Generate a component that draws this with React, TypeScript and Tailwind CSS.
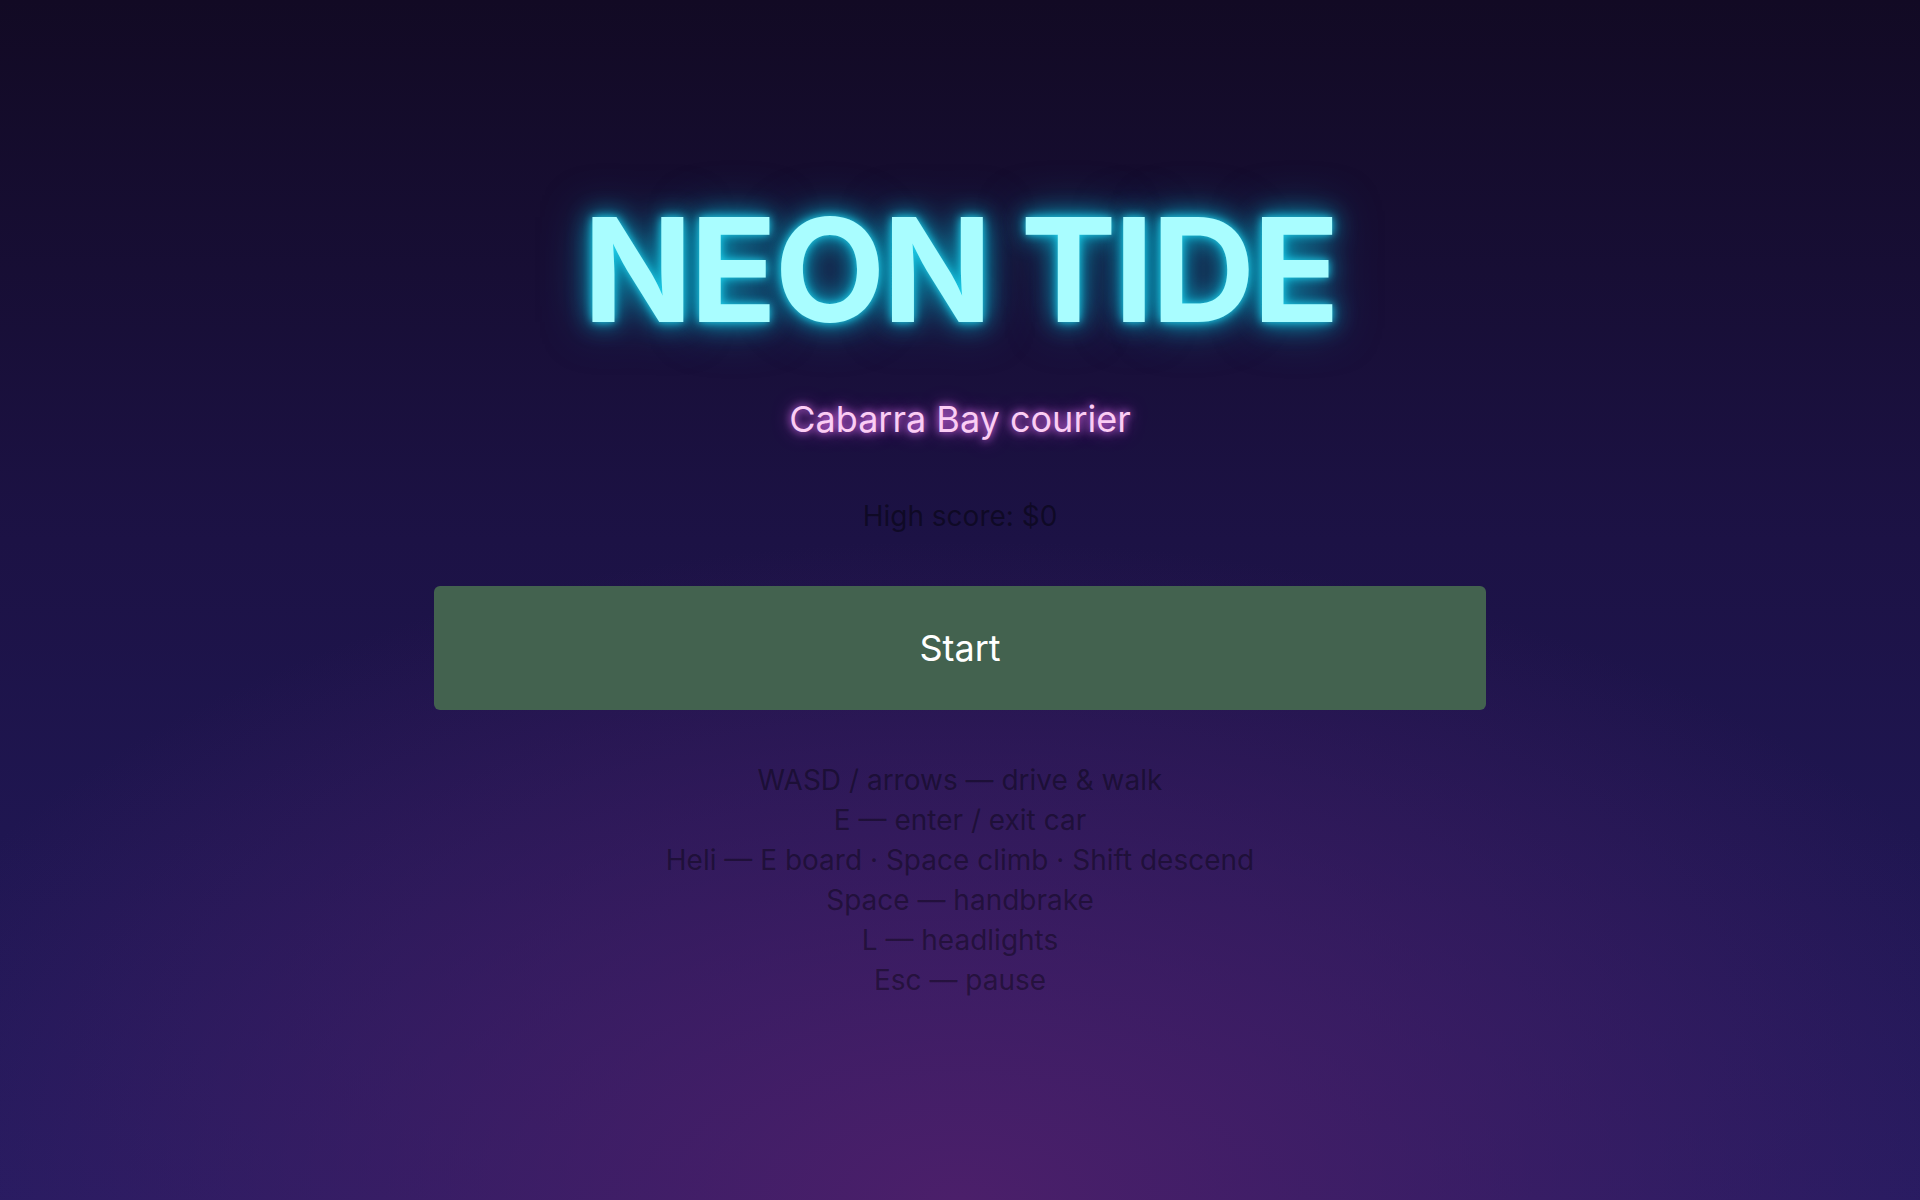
const controls = [
  'WASD / arrows — drive & walk',
  'E — enter / exit car',
  'Heli — E board · Space climb · Shift descend',
  'Space — handbrake',
  'L — headlights',
  'Esc — pause',
];

export default function App() {
  return (
    <div className="min-h-screen w-full flex flex-col items-center font-['Inter',sans-serif] bg-[radial-gradient(ellipse_60%_55%_at_50%_100%,#4b1f6a_0%,rgba(75,31,106,0)_100%),linear-gradient(to_bottom,#120a24_0%,#1c1245_45%,#231b60_100%)]">
      <h1 className="mt-[198px] text-[144px] leading-none font-bold tracking-[-0.02em] text-[#a9fdff] [text-shadow:0_0_8px_#22d3ee,0_0_24px_#06b6d4,0_0_48px_rgba(6,182,212,0.5)]">
        NEON TIDE
      </h1>
      <p className="mt-[59px] text-[36px] leading-none text-[#fbcdf4] [text-shadow:0_0_8px_#e879f9,0_0_18px_rgba(217,70,239,0.6)]">
        Cabarra Bay courier
      </p>
      <p className="mt-[65px] text-[28px] leading-none text-black/45">High score: $0</p>
      <button className="mt-[56px] w-[1052px] h-[124px] rounded-md bg-[#43624f] text-white text-[36px]">
        Start
      </button>
      <div className="mt-[50px] flex flex-col items-center text-[28px] leading-[40px] text-black/40">
        {controls.map(line => (
          <div key={line}>{line}</div>
        ))}
      </div>
    </div>
  );
}
